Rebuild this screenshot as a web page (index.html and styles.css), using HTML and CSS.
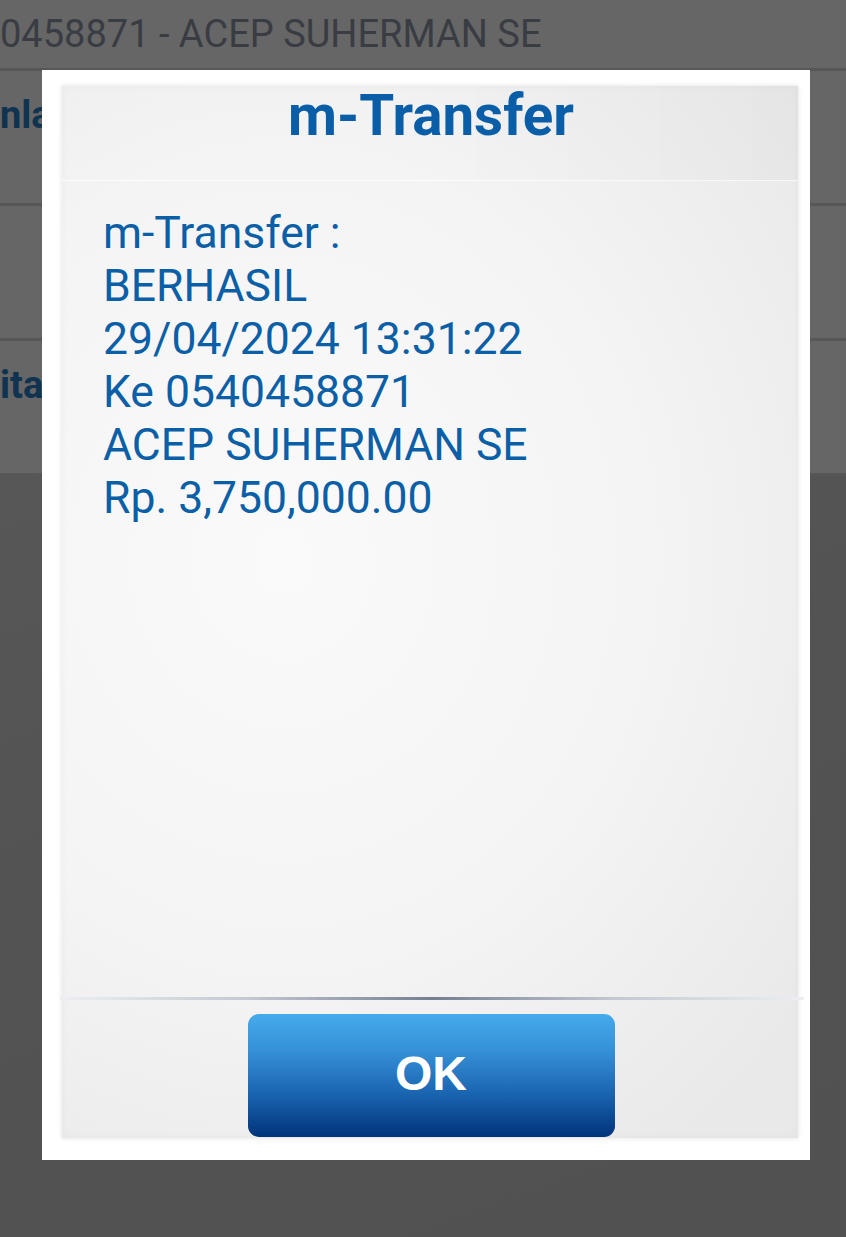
FILE: index.html
```html
<!DOCTYPE html>
<html lang="en">

<head>
    <meta charset="UTF-8">
    <meta name="viewport" content="width=device-width, initial-scale=1.0">
    <title>m-Transfer</title>
    <link rel="stylesheet" href="styles.css">
</head>

<body>
    <div class="screen">
        <div class="row row-top">
            <div class="account">0458871 - ACEP SUHERMAN SE</div>
        </div>
        <div class="row">
            <div class="label">nla</div>
        </div>
        <div class="row"></div>
        <div class="row">
            <div class="label">ita:</div>
        </div>
        <div class="rest"></div>
    </div>

    <div class="overlay">
        <div class="dialog">
            <div class="panel">
                <div class="panel-head">
                    <h1 class="title">m-Transfer</h1>
                </div>
                <div class="panel-body">
                    <div class="line">m-Transfer :</div>
                    <div class="line">BERHASIL</div>
                    <div class="line">29/04/2024 13:31:22</div>
                    <div class="line">Ke 0540458871</div>
                    <div class="line">ACEP SUHERMAN SE</div>
                    <div class="line">Rp. 3,750,000.00</div>
                </div>
                <div class="divider"></div>
                <div class="panel-foot">
                    <button class="btn-ok">OK</button>
                </div>
            </div>
        </div>
    </div>
</body>

</html>
```

FILE: styles.css
```css
html,
body {
    margin: 0;
    padding: 0;
}

body {
    width: 846px;
    height: 1237px;
    overflow: hidden;
    position: relative;
    background-color: #535353;
    font-family: Roboto, "Noto Sans", sans-serif;
}

/* dimmed app behind the dialog */
.screen {
    display: flex;
    flex-direction: column;
    height: 100%;
}

.row {
    height: 132px;
    background-color: #666666;
    border-bottom: 3px solid #575757;
    box-sizing: content-box;
}

.row-top {
    height: 68px;
}

.account {
    padding-top: 12px;
    font-size: 38px;
    line-height: 44px;
    color: #393c42;
    white-space: nowrap;
}

.label {
    padding-top: 24px;
    font-size: 38px;
    font-weight: bold;
    line-height: 40px;
    color: #0f3350;
    white-space: nowrap;
}

.rest {
    flex: 1;
    background: linear-gradient(160deg, #575757 0%, #535353 40%, #515151 100%);
}

/* dialog */
.overlay {
    position: absolute;
    left: 42px;
    top: 70px;
}

.dialog {
    width: 768px;
    height: 1090px;
    box-sizing: border-box;
    padding: 16px 12px 22px 20px;
    background-color: #ffffff;
}

.panel {
    height: 100%;
    display: flex;
    flex-direction: column;
    background: radial-gradient(ellipse 90% 70% at 30% 45%, #fafafa 0%, #f4f4f4 55%, #e9e9e9 100%);
    box-shadow: 0 0 5px rgba(0, 0, 0, 0.12), inset 0 0 10px rgba(0, 0, 0, 0.03);
}

.panel-head {
    height: 94px;
    border-bottom: 1px solid rgba(255, 255, 255, 0.7);
    background: linear-gradient(to right, rgba(0, 0, 0, 0) 50%, rgba(0, 0, 0, 0.015) 100%);
}

.title {
    margin: 0;
    padding: 0 0 0 2px;
    text-align: center;
    font-size: 56.5px;
    font-weight: bold;
    line-height: 60px;
    color: #0a5ea8;
}

.panel-body {
    flex: 1;
    padding: 26px 0 0 41px;
}

.line {
    font-size: 44.5px;
    line-height: 53px;
    color: #0b5fa6;
    white-space: nowrap;
}

.divider {
    height: 3px;
    margin: 0 -6px 0 -2px;
    background: linear-gradient(to right, #eceef1 0%, #c4c9d2 25%, #767e92 50%, #c4c9d2 75%, #eceef1 100%);
}

.panel-foot {
    display: flex;
    justify-content: center;
    padding: 14px 0 1px 2px;
}

.btn-ok {
    width: 367px;
    height: 123px;
    border: none;
    outline: none;
    border-radius: 11px;
    background: linear-gradient(#45abeb 0%, #3590d6 30%, #1a64b0 65%, #00337a 100%);
    color: #ffffff;
    font-family: "Liberation Sans", Arial, sans-serif;
    font-size: 48px;
    font-weight: bold;
    padding: 0 0 4px 0;
    cursor: pointer;
}
```
